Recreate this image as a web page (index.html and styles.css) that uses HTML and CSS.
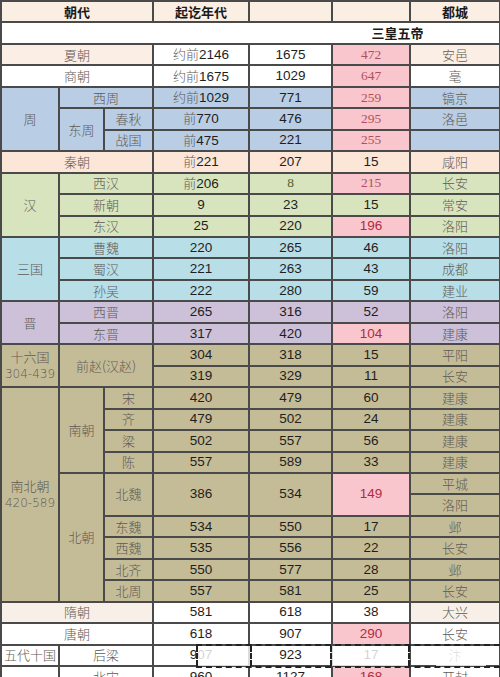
FILE: index.html
```html
<!DOCTYPE html>
<html lang="zh">
<head>
<meta charset="utf-8">
<title>朝代表</title>
<link rel="stylesheet" href="styles.css">
</head>
<body>
<div class="wrap">
<table class="dyn">
  <colgroup>
    <col class="w0"><col class="w1"><col class="w2"><col class="w3"><col class="w4"><col class="w5"><col class="w6">
  </colgroup>
  <tr class="head">
    <td colspan="3">朝代</td><td>起讫年代</td><td></td><td></td><td>都城</td>
  </tr>
  <tr>
    <td colspan="7" class="white banner">三皇五帝</td>
  </tr>
  <tr>
    <td colspan="3" class="peach cn">夏朝</td><td class="white num"><span class="pre">约前</span>2146</td><td class="white num">1675</td><td class="pink serifnum">472</td><td class="peach cn">安邑</td>
  </tr>
  <tr>
    <td colspan="3" class="white cn">商朝</td><td class="white num"><span class="pre">约前</span>1675</td><td class="white num">1029</td><td class="pink serifnum">647</td><td class="white cn">亳</td>
  </tr>
  <tr class="blue">
    <td rowspan="3" class="cn">周</td><td colspan="2" class="cn">西周</td><td class="num"><span class="pre">约前</span>1029</td><td class="num">771</td><td class="pink serifnum">259</td><td class="cn">镐京</td>
  </tr>
  <tr class="blue">
    <td rowspan="2" class="cn">东周</td><td class="cn">春秋</td><td class="num"><span class="pre">前</span>770</td><td class="num">476</td><td class="pink serifnum">295</td><td class="cn">洛邑</td>
  </tr>
  <tr class="blue">
    <td class="cn">战国</td><td class="num"><span class="pre">前</span>475</td><td class="num">221</td><td class="pink serifnum">255</td><td></td>
  </tr>
  <tr class="qin">
    <td colspan="3" class="cn">秦朝</td><td class="num"><span class="pre">前</span>221</td><td class="num">207</td><td class="num">15</td><td class="cn">咸阳</td>
  </tr>
  <tr class="green">
    <td rowspan="3" class="cn">汉</td><td colspan="2" class="cn">西汉</td><td class="num"><span class="pre">前</span>206</td><td class="num olive">8</td><td class="pink serifnum">215</td><td class="cn">长安</td>
  </tr>
  <tr class="green">
    <td colspan="2" class="cn">新朝</td><td class="num">9</td><td class="num">23</td><td class="num">15</td><td class="cn">常安</td>
  </tr>
  <tr class="green">
    <td colspan="2" class="cn">东汉</td><td class="num">25</td><td class="num">220</td><td class="pink num red">196</td><td class="cn">洛阳</td>
  </tr>
  <tr class="cyan">
    <td rowspan="3" class="cn">三国</td><td colspan="2" class="cn">曹魏</td><td class="num">220</td><td class="num">265</td><td class="num">46</td><td class="cn">洛阳</td>
  </tr>
  <tr class="cyan">
    <td colspan="2" class="cn">蜀汉</td><td class="num">221</td><td class="num">263</td><td class="num">43</td><td class="cn">成都</td>
  </tr>
  <tr class="cyan">
    <td colspan="2" class="cn">孙吴</td><td class="num">222</td><td class="num">280</td><td class="num">59</td><td class="cn">建业</td>
  </tr>
  <tr class="lav">
    <td rowspan="2" class="cn">晋</td><td colspan="2" class="cn">西晋</td><td class="num">265</td><td class="num">316</td><td class="num">52</td><td class="cn">洛阳</td>
  </tr>
  <tr class="lav">
    <td colspan="2" class="cn">东晋</td><td class="num">317</td><td class="num">420</td><td class="pink num red">104</td><td class="cn">建康</td>
  </tr>
  <tr class="tan">
    <td rowspan="2" class="cn two">十六国<br><span class="yr">304-439</span></td><td rowspan="2" colspan="2" class="cn">前赵(汉赵)</td><td class="num">304</td><td class="num">318</td><td class="num">15</td><td class="cn">平阳</td>
  </tr>
  <tr class="tan">
    <td class="num">319</td><td class="num">329</td><td class="num">11</td><td class="cn">长安</td>
  </tr>
  <tr class="tan">
    <td rowspan="10" class="cn two">南北朝<br><span class="yr">420-589</span></td><td rowspan="4" class="cn">南朝</td><td class="cn">宋</td><td class="num">420</td><td class="num">479</td><td class="num">60</td><td class="cn">建康</td>
  </tr>
  <tr class="tan">
    <td class="cn">齐</td><td class="num">479</td><td class="num">502</td><td class="num">24</td><td class="cn">建康</td>
  </tr>
  <tr class="tan">
    <td class="cn">梁</td><td class="num">502</td><td class="num">557</td><td class="num">56</td><td class="cn">建康</td>
  </tr>
  <tr class="tan">
    <td class="cn">陈</td><td class="num">557</td><td class="num">589</td><td class="num">33</td><td class="cn">建康</td>
  </tr>
  <tr class="tan">
    <td rowspan="6" class="cn">北朝</td><td rowspan="2" class="cn">北魏</td><td rowspan="2" class="num">386</td><td rowspan="2" class="num">534</td><td rowspan="2" class="pink num red">149</td><td class="cn">平城</td>
  </tr>
  <tr class="tan">
    <td class="cn">洛阳</td>
  </tr>
  <tr class="tan">
    <td class="cn">东魏</td><td class="num">534</td><td class="num">550</td><td class="num">17</td><td class="cn">邺</td>
  </tr>
  <tr class="tan">
    <td class="cn">西魏</td><td class="num">535</td><td class="num">556</td><td class="num">22</td><td class="cn">长安</td>
  </tr>
  <tr class="tan">
    <td class="cn">北齐</td><td class="num">550</td><td class="num">577</td><td class="num">28</td><td class="cn">邺</td>
  </tr>
  <tr class="tan">
    <td class="cn">北周</td><td class="num">557</td><td class="num">581</td><td class="num">25</td><td class="cn">长安</td>
  </tr>
  <tr>
    <td colspan="3" class="sui cn">隋朝</td><td class="white num">581</td><td class="white num">618</td><td class="white num">38</td><td class="sui cn">大兴</td>
  </tr>
  <tr>
    <td colspan="3" class="white cn">唐朝</td><td class="white num">618</td><td class="white num">907</td><td class="pink num red">290</td><td class="white cn">长安</td>
  </tr>
  <tr class="white">
    <td class="cn">五代十国</td><td colspan="2" class="cn">后梁</td><td class="num">907</td><td class="num">923</td><td class="num">17</td><td class="cn">汴</td>
  </tr>
  <tr class="white">
    <td></td><td colspan="2" class="cn">北宋</td><td class="num">960</td><td class="num">1127</td><td class="pink num red">168</td><td class="cn">开封</td>
  </tr>
</table>
<div class="mark">
  <span class="blk b1"></span><span class="blk b3"></span><span class="blk b4"></span>
</div>
</div>
</body>
</html>
```

FILE: styles.css
```css
html, body {
  margin: 0;
  padding: 0;
  background: #ffffff;
}

.wrap {
  position: relative;
  width: 500px;
  height: 677px;
  overflow: hidden;
}

.dyn {
  border-collapse: collapse;
  table-layout: fixed;
  width: 499px;
  font-family: "Noto Sans CJK SC", "Liberation Sans", sans-serif;
  font-size: 13px;
}

.w0 { width: 58px; }
.w1 { width: 45px; }
.w2 { width: 49px; }
.w3 { width: 96px; }
.w4 { width: 83px; }
.w5 { width: 78px; }
.w6 { width: 90px; }

.dyn tr {
  height: 21.46px;
}

.dyn td {
  border: 2px solid #4a4a4a;
  padding: 0;
  text-align: center;
  vertical-align: middle;
  line-height: 16px;
  white-space: nowrap;
  overflow: hidden;
}

.head td {
  background: #fbeee3;
  font-weight: bold;
  color: #1a1a1a;
  font-size: 13px;
}

.banner {
  font-weight: bold;
  color: #1a1a1a;
  padding-left: 294px !important;
}

.cn {
  color: #5e5a55;
  font-weight: 300;
  font-size: 13px;
}

.pre {
  font-family: "Noto Sans CJK SC", sans-serif;
  font-weight: 300;
  color: #5e5a55;
  font-size: 13px;
}

.num {
  font-family: "Liberation Sans", Arial, sans-serif;
  color: #1e1e1e;
  font-size: 13.5px;
}

.serifnum {
  font-family: "Liberation Serif", serif;
  color: #b0505e;
  font-size: 13.5px;
}

.red { color: #b02c44; }
.olive { color: #556030; font-family: "Liberation Serif", serif; }

.yr {
  font-family: "DejaVu Sans", sans-serif;
  font-size: 12px;
  color: #5e5a55;
}

.two { line-height: 16px; }

.white, .white td { background: #ffffff; }
.peach { background: #fbeee4; }
.sui { background: #f8efe8; }
.qin td { background: #fce6d8; }
.blue td { background: #b9cde4; }
.green td { background: #d8e4bd; }
.cyan td { background: #b8dee8; }
.lav td { background: #ccc1d9; }
.tan td { background: #c4bc97; }
.dyn td.pink { background: #f8c6cc; }

.mark {
  position: absolute;
  left: 196px;
  top: 644px;
  width: 304px;
  height: 20px;
  border-top: 2px dashed #222;
  border-bottom: 2px dashed #222;
  pointer-events: none;
}

.blk {
  position: absolute;
  top: 0;
  height: 20px;
  background: rgba(255, 255, 255, 0.8);
}

.b1 { left: 0; width: 52px; border-left: 2px dashed #222; border-right: 2px dashed #222; }
.b3 { left: 134px; width: 76px; border-left: 2px dashed #222; border-right: 2px dashed #222; }
.b4 { left: 240px; width: 50px; }
```
